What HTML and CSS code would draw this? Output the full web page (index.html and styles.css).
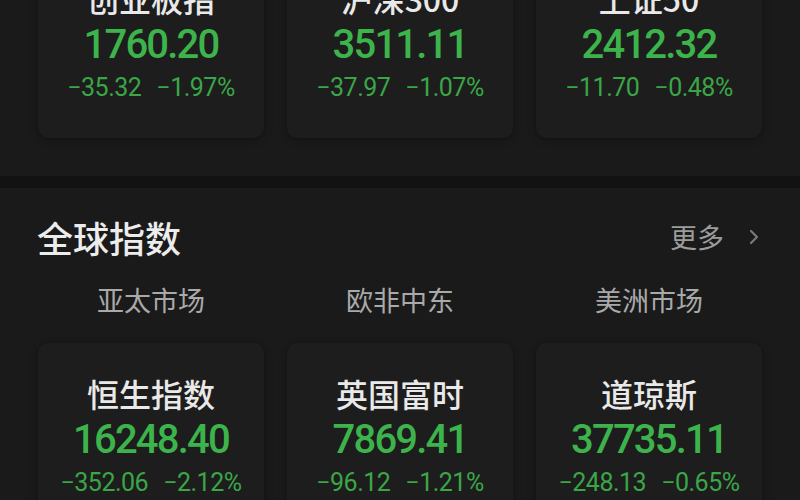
FILE: index.html
```html
<!DOCTYPE html>
<html lang="zh-CN">
<head>
<meta charset="utf-8">
<title>行情</title>
<link rel="stylesheet" href="styles.css">
</head>
<body>
<main class="page">
  <section class="domestic">
    <div class="card-row">
      <div class="card">
        <div class="card-name">创业板指</div>
        <div class="card-price">1760.20</div>
        <div class="card-change"><span>−35.32</span><span>−1.97%</span></div>
      </div>
      <div class="card">
        <div class="card-name">沪深300</div>
        <div class="card-price">3511.11</div>
        <div class="card-change"><span>−37.97</span><span>−1.07%</span></div>
      </div>
      <div class="card">
        <div class="card-name">上证50</div>
        <div class="card-price">2412.32</div>
        <div class="card-change"><span>−11.70</span><span>−0.48%</span></div>
      </div>
    </div>
  </section>

  <div class="divider"></div>

  <section class="global">
    <header class="section-head">
      <h2 class="section-title">全球指数</h2>
      <a class="more" href="#">更多
        <svg class="chevron" width="12" height="18" viewBox="0 0 12 18"><path d="M3 3 L9 9 L3 15" fill="none" stroke="currentColor" stroke-width="2.2" stroke-linecap="round" stroke-linejoin="round"/></svg>
      </a>
    </header>
    <div class="regions">
      <div class="region">亚太市场</div>
      <div class="region">欧非中东</div>
      <div class="region">美洲市场</div>
    </div>
    <div class="card-row">
      <div class="card">
        <div class="card-name">恒生指数</div>
        <div class="card-price">16248.40</div>
        <div class="card-change"><span>−352.06</span><span>−2.12%</span></div>
      </div>
      <div class="card">
        <div class="card-name">英国富时</div>
        <div class="card-price">7869.41</div>
        <div class="card-change"><span>−96.12</span><span>−1.21%</span></div>
      </div>
      <div class="card">
        <div class="card-name">道琼斯</div>
        <div class="card-price">37735.11</div>
        <div class="card-change"><span>−248.13</span><span>−0.65%</span></div>
      </div>
    </div>
  </section>
</main>
</body>
</html>
```

FILE: styles.css
```css
html, body {
  margin: 0;
  padding: 0;
  background: #1a1a1b;
}

body {
  width: 800px;
  height: 500px;
  overflow: hidden;
  font-family: "Noto Sans CJK SC", "Noto Sans", sans-serif;
  color: #e8e8e8;
}

.page {
  display: flex;
  flex-direction: column;
}

/* the list is scrolled: the top row sits partly above the viewport */
.domestic {
  margin-top: -52px;
  padding-bottom: 38px;
}

.card-row {
  display: grid;
  grid-template-columns: repeat(3, 1fr);
  gap: 23px;
  padding: 0 38px;
}

.card {
  display: flex;
  flex-direction: column;
  align-items: center;
  padding: 30px 0 34px;
  background: #1d1d1e;
  border-radius: 10px;
  box-shadow: 0 3px 8px rgba(0, 0, 0, 0.22), 0 0 3px rgba(0, 0, 0, 0.18);
}

.card-name {
  font-size: 32px;
  line-height: 40px;
  font-weight: 500;
  color: #e9e9e9;
}

.card-price {
  margin-top: 5px;
  font-family: Roboto, "Noto Sans", sans-serif;
  font-size: 40px;
  line-height: 44px;
  font-weight: 500;
  letter-spacing: -1.8px;
  color: #3db34b;
}

.card-change {
  margin-top: 5px;
  display: flex;
  gap: 15px;
  font-family: Roboto, "Noto Sans", sans-serif;
  font-size: 25px;
  line-height: 32px;
  letter-spacing: -0.5px;
  color: #3aa646;
}

.divider {
  height: 12px;
  background: #121213;
}

.global {
  padding-top: 25px;
}

.section-head {
  display: flex;
  align-items: center;
  justify-content: space-between;
  padding: 0 40px 0 37px;
  height: 48px;
}

.section-title {
  margin: 0;
  font-size: 36px;
  line-height: 48px;
  font-weight: 500;
  color: #ececec;
}

.more {
  display: flex;
  align-items: center;
  gap: 24px;
  font-size: 27px;
  line-height: 34px;
  color: #9c9c9c;
  text-decoration: none;
}

.chevron {
  color: #7a7a7a;
}

.regions {
  display: grid;
  grid-template-columns: repeat(3, 1fr);
  gap: 23px;
  padding: 0 38px;
  margin-top: 21px;
  margin-bottom: 25px;
}

.region {
  text-align: center;
  font-size: 27px;
  line-height: 36px;
  color: #a9a9a9;
}
```
